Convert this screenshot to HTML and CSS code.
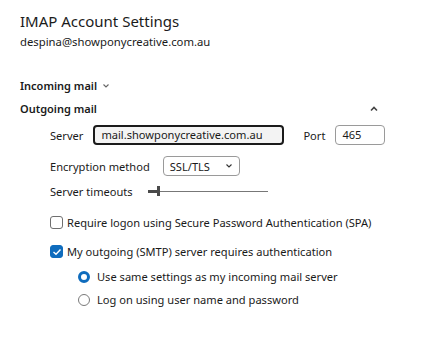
FILE: index.html
```html
<!DOCTYPE html>
<html lang="en">
<head>
    <meta charset="UTF-8">
    <title>IMAP Account Settings</title>
    <link rel="stylesheet" href="styles.css">
</head>
<body>
    <div class="header">
        <h1 class="title">IMAP Account Settings</h1>
        <p class="account">despina@showponycreative.com.au</p>
    </div>

    <div class="section-toggle">
        <span>Incoming mail</span>
        <svg class="chevron" width="8" height="6" viewBox="0 0 8 6"><path d="M1.5 1.5 L4 4 L6.5 1.5" fill="none" stroke="#666" stroke-width="1.1"/></svg>
    </div>

    <div class="section-head">
        <span>Outgoing mail</span>
        <svg class="caret-up" width="8" height="6" viewBox="0 0 8 6"><path d="M1 4.5 L4 1.5 L7 4.5" fill="none" stroke="#444" stroke-width="1.6"/></svg>
    </div>

    <div class="section-body">
        <div class="row server-row">
            <label class="lbl">Server</label>
            <div class="text-input focused">mail.showponycreative.com.au</div>
            <label class="lbl port-lbl">Port</label>
            <div class="text-input port">465</div>
        </div>

        <div class="row">
            <label class="lbl">Encryption method</label>
            <div class="select">
                <span>SSL/TLS</span>
                <svg width="8" height="6" viewBox="0 0 8 6"><path d="M1.5 1.5 L4 4 L6.5 1.5" fill="none" stroke="#333" stroke-width="1.1"/></svg>
            </div>
        </div>

        <div class="row timeout-row">
            <label class="lbl">Server timeouts</label>
            <div class="slider">
                <div class="slider-fill"></div>
                <div class="slider-thumb"></div>
                <div class="slider-track"></div>
            </div>
        </div>

        <div class="check-row">
            <span class="checkbox"></span>
            <span>Require logon using Secure Password Authentication (SPA)</span>
        </div>

        <div class="check-row second">
            <span class="checkbox checked">
                <svg width="10" height="8" viewBox="0 0 10 8"><path d="M1.5 4 L4 6.3 L8.5 1.5" fill="none" stroke="#fff" stroke-width="1.4"/></svg>
            </span>
            <span>My outgoing (SMTP) server requires authentication</span>
        </div>

        <div class="radio-group">
            <div class="radio-row">
                <span class="radio selected"></span>
                <span>Use same settings as my incoming mail server</span>
            </div>
            <div class="radio-row">
                <span class="radio"></span>
                <span>Log on using user name and password</span>
            </div>
        </div>
    </div>
</body>
</html>
```

FILE: styles.css
```css
* {
    margin: 0;
    padding: 0;
    box-sizing: border-box;
}

body {
    font-family: "Noto Sans", "Open Sans", sans-serif;
    font-size: 11.1px;
    color: #1a1a1a;
    background: #fff;
    padding: 10px 20px;
}

.title {
    font-size: 15px;
    font-weight: 400;
    line-height: 22px;
    color: #1b1b1b;
}

.account {
    font-size: 11.3px;
    line-height: 18px;
    margin-top: 1px;
}

.section-toggle,
.section-head {
    display: flex;
    align-items: center;
    font-weight: 600;
    font-size: 11px;
    line-height: 18px;
}

.section-toggle {
    margin-top: 26px;
    gap: 5px;
}

.section-head {
    margin-top: 5px;
    justify-content: space-between;
    width: 358px;
}

.section-body {
    padding-left: 30px;
}

.row {
    display: flex;
    align-items: center;
    height: 20px;
    margin-top: 11px;
}

.server-row {
    margin-top: 7px;
}

.timeout-row {
    margin-top: 5px;
}

.lbl {
    margin-right: 10px;
}

.port-lbl {
    margin-left: 19px;
    margin-right: 10px;
}

.text-input {
    height: 20px;
    border: 1px solid #8a8a8a;
    border-radius: 4px;
    padding: 0 6px;
    line-height: 18px;
    background: #fff;
}

.text-input.focused {
    width: 191px;
    border: 2px solid #1b1b1b;
    background: #f3f3f3;
    line-height: 16px;
    padding: 0 6px;
}

.text-input.port {
    width: 50px;
    border-color: #9a9a9a;
}

.select {
    width: 77px;
    height: 20px;
    border: 1px solid #9a9a9a;
    border-radius: 4px;
    display: flex;
    align-items: center;
    justify-content: space-between;
    padding: 0 6px;
    margin-left: 3px;
}

.slider {
    display: flex;
    align-items: center;
    margin-left: 5px;
    width: 120px;
}

.slider-fill {
    width: 9px;
    height: 3px;
    background: #4a4a4a;
}

.slider-thumb {
    width: 3px;
    height: 10px;
    background: #4a4a4a;
}

.slider-track {
    flex: 1;
    height: 1px;
    background: #777;
}

.check-row {
    display: flex;
    align-items: center;
    gap: 4px;
    margin-top: 13px;
    line-height: 17px;
}

.check-row.second {
    margin-top: 12px;
}

.checkbox {
    width: 13px;
    height: 13px;
    border: 1px solid #6f6f6f;
    border-radius: 3px;
    display: flex;
    align-items: center;
    justify-content: center;
}

.checkbox.checked {
    background: #0f6cbd;
    border-color: #0f6cbd;
}

.radio-group {
    padding-left: 28px;
    margin-top: 8px;
}

.radio-row {
    display: flex;
    align-items: center;
    gap: 7px;
    line-height: 17px;
    margin-top: 6px;
}

.radio-row:first-child {
    margin-top: 6px;
}

.radio {
    width: 12px;
    height: 12px;
    border: 1px solid #7a7a7a;
    border-radius: 50%;
}

.radio.selected {
    border: 3.5px solid #0f6cbd;
}
```
